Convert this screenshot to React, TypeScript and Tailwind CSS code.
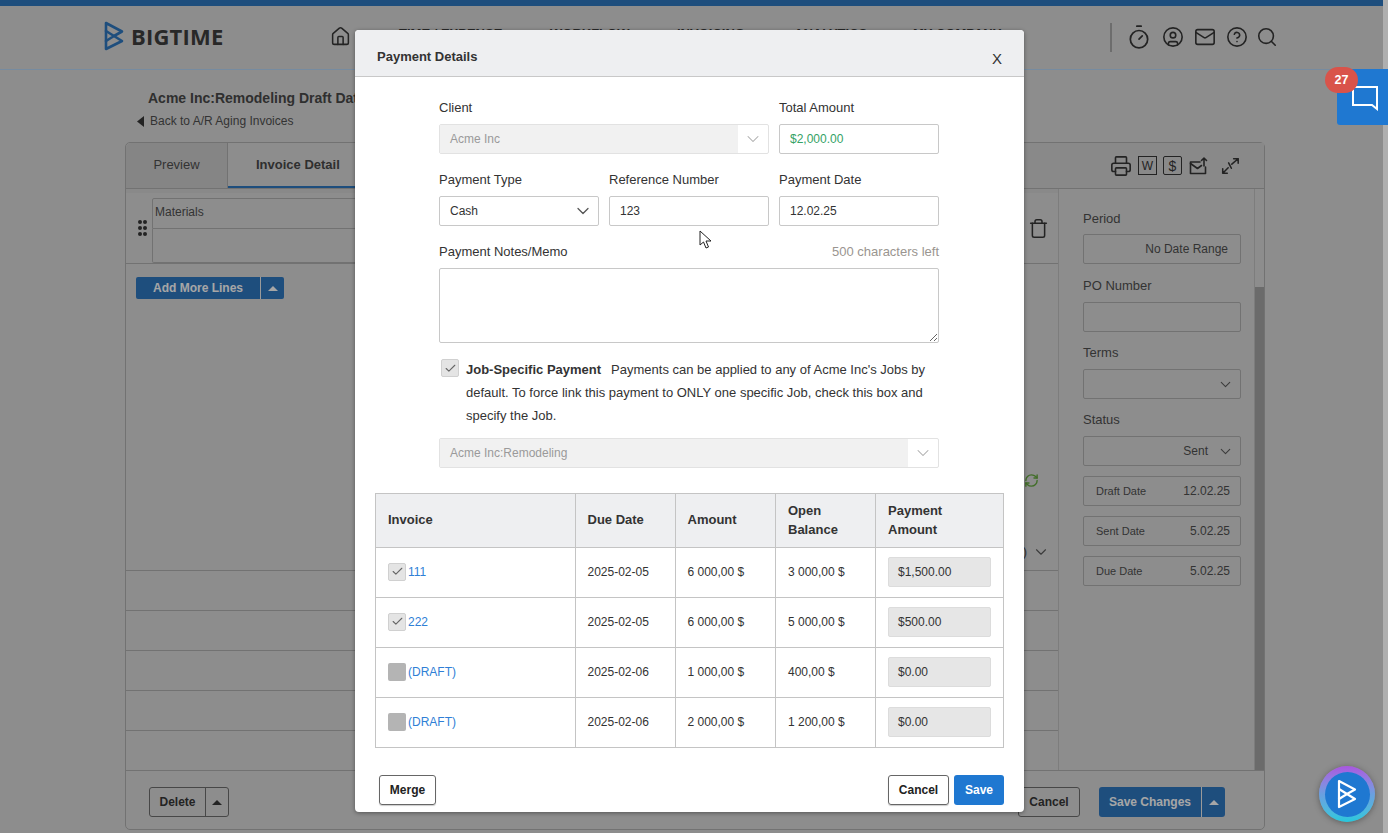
import React from 'react';
import {
  House,
  Timer,
  CircleUser,
  Mail,
  CircleHelp,
  Search,
  Printer,
  Trash,
  ChevronDown,
  RefreshCw,
  Check,
} from 'lucide-react';

const invoices = [
  { id: '111', due: '2025-02-05', amount: '6 000,00 $', open: '3 000,00 $', pay: '$1,500.00', checked: true },
  { id: '222', due: '2025-02-05', amount: '6 000,00 $', open: '5 000,00 $', pay: '$500.00', checked: true },
  { id: '(DRAFT)', due: '2025-02-06', amount: '1 000,00 $', open: '400,00 $', pay: '$0.00', checked: false },
  { id: '(DRAFT)', due: '2025-02-06', amount: '2 000,00 $', open: '1 200,00 $', pay: '$0.00', checked: false },
];

const BigTimeMark = ({ className }: { className?: string }) => (
  <svg viewBox="0 0 22 32" fill="none" stroke="currentColor" strokeLinejoin="round" strokeLinecap="round" className={className}>
    <path d="M3 3 L19 11.5 L11 16 L19 21 L3 29 Z" />
    <path d="M3 11 L11 16 L3 21" />
  </svg>
);

const Caret = () => (
  <svg width="10" height="5" viewBox="0 0 10 5" className="fill-current">
    <polygon points="5,0 10,5 0,5" />
  </svg>
);

const CheckBox = ({ checked }: { checked: boolean }) =>
  checked ? (
    <span className="flex h-[18px] w-[18px] shrink-0 items-center justify-center rounded-[2px] border border-[#d0d0d0] bg-[#e4e4e4]">
      <Check size={13} strokeWidth={2} className="text-[#666]" />
    </span>
  ) : (
    <span className="block h-[18px] w-[18px] shrink-0 rounded-[2px] bg-[#b4b4b4]" />
  );

const DisabledSelect = ({ value }: { value: string }) => (
  <div className="flex h-[30px] items-center rounded-[2px] border border-[#e2e2e2] text-[12px] text-[#9a9a9a]">
    <div className="flex h-full flex-1 items-center bg-[#f1f1f1] pl-[10px]">{value}</div>
    <div className="flex w-[30px] items-center justify-center">
      <ChevronDown size={20} strokeWidth={1.25} className="text-[#aaa]" />
    </div>
  </div>
);

const FieldLabel = ({ children }: { children: React.ReactNode }) => (
  <div className="mb-[5px] text-[13px] leading-[22px]">{children}</div>
);

const SideLabel = ({ children }: { children: React.ReactNode }) => (
  <div className="text-[13px] leading-[20px] text-[#4a4a4a]">{children}</div>
);

const SideDate = ({ label, value }: { label: string; value: string }) => (
  <div className="mt-[10px] flex h-[30px] items-center justify-between rounded-[2px] border border-[#a4a4a4] pl-[12px] pr-[10px] text-[11px] text-[#4a4a4a]">
    <span>{label}</span>
    <span className="text-[12px]">{value}</span>
  </div>
);

const Background = () => (
  <div className="flex h-full">
    <div className="flex min-w-0 flex-1 flex-col">
      <div className="h-[6px] shrink-0 bg-[#2c70b4]" />
      <header className="flex h-[64px] shrink-0 items-center border-b border-[#a9c8e6]">
        <div className="mb-[3px] ml-[103px] flex w-[227px] items-center">
          <BigTimeMark className="h-[32px] w-[22px] text-[#2c70b4] [stroke-width:2.6]" />
          <span className="ml-[6px] font-['Open_Sans',sans-serif] text-[22px] font-bold leading-none tracking-[0.2px] text-[#3a3a3a]">BIGTIME</span>
        </div>
        <House size={21} strokeWidth={1.75} className="mb-[2px] w-[69px] shrink-0 pr-[48px] text-[#333]" />
        <nav className="mb-[7px] flex text-[13px] font-bold text-[#3a3a3a]">
          <span className="w-[151px]">TIME / EXPENSE</span>
          <span className="w-[127px]">WORKFLOW</span>
          <span className="w-[117px]">INVOICING</span>
          <span className="w-[119px]">ANALYTICS</span>
          <span className="w-[197px]">MY COMPANY</span>
        </nav>
        <div className="h-[29px] w-[2px] bg-[#9d9d9d]" />
        <div className="mb-[2px] ml-[14px] flex items-center gap-[10px] text-[#333]">
          <Timer size={26} strokeWidth={1.6} />
          <CircleUser size={22} strokeWidth={1.75} />
          <Mail size={22} strokeWidth={1.75} />
          <CircleHelp size={22} strokeWidth={1.75} />
          <Search size={22} strokeWidth={1.75} className="ml-[-2px]" />
        </div>
      </header>

      <div className="ml-[136px] mt-[19px] h-[53px] shrink-0">
        <div className="pl-[12px] text-[14px] font-bold leading-[18px] text-[#444]">Acme Inc:Remodeling Draft Date 12.02.25</div>
        <div className="mt-[5px] flex items-center text-[12px] leading-[18px] text-[#4a4a4a]">
          <svg width="8" height="11" viewBox="0 0 8 11" className="mr-[6px] fill-[#333]">
            <polygon points="8,0 8,11 1,5.5" />
          </svg>
          Back to A/R Aging Invoices
        </div>
      </div>

      <section className="ml-[125px] flex h-[688px] w-[1140px] shrink-0 flex-col rounded-[5px] border border-[#a4a4a4]">
        <div className="flex h-[46px] shrink-0 items-stretch border-b border-[#a4a4a4]">
          <div className="flex w-[102px] items-center justify-center rounded-tl-[5px] border-r border-[#a4a4a4] bg-[#bfbfbf] pb-[1px] text-[13px] text-[#4a4a4a]">Preview</div>
          <div className="flex w-[200px] items-center border-b-[2px] border-[#2c70b4] pl-[28px] text-[13px] font-bold text-[#444]">Invoice Detail</div>
          <div className="flex flex-1 items-center justify-end gap-[6px] bg-[#c4c4c4] pr-[24px] text-[#333]">
            <Printer size={22} strokeWidth={1.75} />
            <span className="flex h-[19px] w-[19px] items-center justify-center border-[1.5px] border-[#333] text-[12px] leading-none">W</span>
            <span className="flex h-[19px] w-[19px] items-center justify-center rounded-[2px] border-[1.5px] border-[#333] text-[14px] leading-none">$</span>
            <svg width="20" height="20" viewBox="0 0 20 20" fill="none" stroke="currentColor" strokeWidth="1.6" strokeLinejoin="round" strokeLinecap="round">
              <path d="M12 6H2.5v11.5h15V11" />
              <path d="M2.5 7.5l7 5 4-3" />
              <path d="M16 10V2M13.5 4.5L16 2l2.5 2.5" />
            </svg>
            <svg width="20" height="20" viewBox="0 0 22 22" fill="none" stroke="currentColor" strokeWidth="1.7" strokeLinecap="round" strokeLinejoin="round" className="ml-[6px]">
              <path d="M13 9l7-6M15 3h5v5M9 13l-6 6M3 14v5h5M9.5 7.5l3 6" />
            </svg>
          </div>
        </div>

        <div className="flex min-h-0 flex-1">
          <div className="flex w-[933px] shrink-0 flex-col border-r border-[#b4b4b4]">
            <div className="h-[4px] shrink-0 bg-[#c4c4c4]" />
            <div className="flex h-[71px] shrink-0 items-center border-b border-[#a4a4a4]">
              <div className="ml-[12px] grid w-[9px] grid-cols-2 gap-x-[1px] gap-y-[2px]">
                {[0, 1, 2, 3, 4, 5].map((d) => (
                  <span key={d} className="h-[4px] w-[4px] rounded-full bg-[#333]" />
                ))}
              </div>
              <div className="ml-[5px] flex flex-1 flex-col self-start pt-[5px]">
                <div className="flex h-[31px] items-center rounded-tl-[2px] border border-[#a4a4a4] pb-[3px] pl-[2px] text-[12px] text-[#4a4a4a]">Materials</div>
                <div className="h-[34px] rounded-bl-[2px] border border-t-0 border-[#a4a4a4]" />
              </div>
              <Trash size={21} strokeWidth={1.75} className="ml-[8px] mr-[9px] text-[#333]" />
            </div>
            <div className="ml-[10px] mt-[13px] flex h-[22px] w-[148px] items-center rounded-[2px] bg-[#2c70b4] text-[12px] font-bold text-[#eee]">
              <span className="flex h-full w-[125px] items-center justify-center border-r border-[#ddd]">Add More Lines</span>
              <span className="flex flex-1 justify-center"><Caret /></span>
            </div>
            <div className="mt-auto flex flex-col">
              <div className="flex h-[24px] justify-end pr-[18px]">
                <RefreshCw size={15} strokeWidth={2.25} className="mr-[1px] text-[#5f9e3b]" />
              </div>
              <div className="mt-[30px] flex h-[44px] items-center justify-end border-b border-[#a4a4a4] pr-[8px] pt-[6px] text-[13px] text-[#4a4a4a]">
                ) <ChevronDown size={18} strokeWidth={1.5} className="ml-[5px] text-[#555]" />
              </div>
              {[0, 1, 2, 3].map((r) => (
                <div key={r} className="h-[40px] border-b border-[#a4a4a4]" />
              ))}
              <div className="h-[39px]" />
            </div>
          </div>

          <aside className="w-[195px] shrink-0 pl-[24px] pr-[13px] pt-[20px]">
            <SideLabel>Period</SideLabel>
            <div className="mt-[5px] flex h-[30px] items-center justify-end rounded-[2px] border border-[#a4a4a4] pb-[1px] pr-[12px] text-[12px] text-[#4a4a4a]">No Date Range</div>
            <div className="mt-[12px]"><SideLabel>PO Number</SideLabel></div>
            <div className="mt-[6px] h-[30px] rounded-[2px] border border-[#a4a4a4]" />
            <div className="mt-[11px]"><SideLabel>Terms</SideLabel></div>
            <div className="mt-[6px] flex h-[30px] items-center justify-end rounded-[2px] border border-[#a4a4a4] pr-[6px]">
              <ChevronDown size={17} strokeWidth={1.5} className="text-[#555]" />
            </div>
            <div className="mt-[11px]"><SideLabel>Status</SideLabel></div>
            <div className="mt-[6px] flex h-[30px] items-center justify-end rounded-[2px] border border-[#a4a4a4] pr-[6px] text-[12px] text-[#4a4a4a]">
              Sent
              <ChevronDown size={17} strokeWidth={1.5} className="ml-[9px] text-[#555]" />
            </div>
            <SideDate label="Draft Date" value="12.02.25" />
            <SideDate label="Sent Date" value="5.02.25" />
            <SideDate label="Due Date" value="5.02.25" />
          </aside>

          <div className="flex w-[10px] shrink-0 flex-col border-l border-[#b4b4b4]">
            <div className="h-[98px]" />
            <div className="flex-1 bg-[#9a9a9a]" />
          </div>
        </div>

        <footer className="flex h-[59px] shrink-0 items-center border-t border-[#a4a4a4] pl-[23px] pt-[4px] text-[12px] font-bold">
          <div className="flex h-[30px] w-[80px] items-center rounded-[3px] border border-[#666] text-[#333]">
            <span className="flex h-full w-[56px] items-center justify-center border-r border-[#666]">Delete</span>
            <span className="flex flex-1 justify-center"><Caret /></span>
          </div>
          <div className="ml-auto flex h-[30px] w-[62px] items-center justify-center rounded-[3px] border border-[#666] text-[#333]">Cancel</div>
          <div className="ml-[19px] mr-[39px] flex h-[30px] w-[126px] items-center rounded-[3px] bg-[#2c70b4] text-[#eee]">
            <span className="flex h-full w-[103px] items-center justify-center border-r border-[#ddd]">Save Changes</span>
            <span className="flex flex-1 justify-center"><Caret /></span>
          </div>
        </footer>
      </section>
    </div>
    <div className="w-[5px] shrink-0 bg-[#fbfbfb]" />
  </div>
);

const PaymentDialog = () => (
  <div className="absolute left-[355px] top-[30px] h-[782px] w-[669px] overflow-hidden rounded-[4px] bg-white shadow-[0_1px_4px_rgba(0,0,0,0.4)]">
    <div className="flex h-[47px] items-center justify-between border-b border-[#c8c8c8] bg-[#eeeff1] px-[22px]">
      <h2 className="mt-[8px] text-[13px] font-bold text-[#333]">Payment Details</h2>
      <span className="mt-[12px] text-[15px] text-[#333]">X</span>
    </div>

    <div className="ml-[84px] w-[500px] pt-[20px] text-[#333]">
      <div className="grid grid-cols-[330px_160px] gap-x-[10px]">
        <div>
          <FieldLabel>Client</FieldLabel>
          <DisabledSelect value="Acme Inc" />
        </div>
        <div>
          <FieldLabel>Total Amount</FieldLabel>
          <div className="flex h-[30px] items-center rounded-[2px] border border-[#c8c8c8] pl-[10px] text-[12px] text-[#35a265]">$2,000.00</div>
        </div>
      </div>

      <div className="mt-[15px] grid grid-cols-3 gap-x-[10px]">
        <div>
          <FieldLabel>Payment Type</FieldLabel>
          <div className="flex h-[30px] items-center justify-between rounded-[2px] border border-[#c8c8c8] pl-[10px] pr-[5px] text-[12px]">
            Cash
            <ChevronDown size={20} strokeWidth={1.5} className="text-[#555]" />
          </div>
        </div>
        <div>
          <FieldLabel>Reference Number</FieldLabel>
          <div className="flex h-[30px] items-center rounded-[2px] border border-[#c8c8c8] pl-[10px] text-[12px]">123</div>
        </div>
        <div>
          <FieldLabel>Payment Date</FieldLabel>
          <div className="flex h-[30px] items-center rounded-[2px] border border-[#c8c8c8] pl-[10px] text-[12px]">12.02.25</div>
        </div>
      </div>

      <div className="mb-[5px] mt-[15px] flex justify-between text-[13px] leading-[22px]">
        <span>Payment Notes/Memo</span>
        <span className="text-[#9a9590]">500 characters left</span>
      </div>
      <textarea className="block h-[75px] w-full rounded-[2px] border border-[#c8c8c8] outline-none" />

      <div className="mt-[15px] flex">
        <div className="ml-[2px] mr-[7px] mt-[1px]"><CheckBox checked /></div>
        <p className="text-[13px] leading-[23px]">
          <b className="mr-[10px]">Job-Specific Payment</b>
          Payments can be applied to any of Acme Inc's Jobs by default. To force link this payment to ONLY one specific Job, check this box and specify the Job.
        </p>
      </div>

      <div className="mt-[11px]"><DisabledSelect value="Acme Inc:Remodeling" /></div>
    </div>

    <table className="ml-[20px] mt-[25px] w-[628px] table-fixed border-collapse text-[12px] text-[#333]">
      <colgroup>
        <col className="w-[200px]" />
        <col className="w-[100px]" />
        <col className="w-[100px]" />
        <col className="w-[100px]" />
        <col className="w-[128px]" />
      </colgroup>
      <thead>
        <tr className="h-[54px] bg-[#eeeff1] text-left text-[13px] leading-[19px]">
          <th className="border border-[#c4c4c4] pb-[2px] pl-[12px] font-bold">Invoice</th>
          <th className="border border-[#c4c4c4] pb-[2px] pl-[11.5px] font-bold">Due Date</th>
          <th className="border border-[#c4c4c4] pb-[2px] pl-[11.5px] font-bold">Amount</th>
          <th className="border border-[#c4c4c4] pb-[2px] pl-[12px] font-bold">Open<br />Balance</th>
          <th className="border border-[#c4c4c4] pb-[2px] pl-[12px] font-bold">Payment<br />Amount</th>
        </tr>
      </thead>
      <tbody>
        {invoices.map((inv, i) => (
          <tr key={i} className="h-[50px]">
            <td className="border border-[#c4c4c4] pb-[2px] pl-[12px]">
              <div className="flex items-center gap-[2px] text-[#2f7fd6]">
                <CheckBox checked={inv.checked} />
                {inv.id}
              </div>
            </td>
            <td className="border border-[#c4c4c4] pb-[2px] pl-[11.5px]">{inv.due}</td>
            <td className="border border-[#c4c4c4] pb-[2px] pl-[11.5px]">{inv.amount}</td>
            <td className="border border-[#c4c4c4] pb-[2px] pl-[12px]">{inv.open}</td>
            <td className="border border-[#c4c4c4] pb-[2px] pl-[12px]">
              <div className="flex h-[30px] w-[103px] items-center rounded-[2px] border border-[#dcdcdc] bg-[#e6e6e6] pl-[9px]">{inv.pay}</div>
            </td>
          </tr>
        ))}
      </tbody>
    </table>

    <div className="mt-[27px] flex px-[20px] text-[12px] font-bold">
      <button className="ml-[4px] h-[30px] w-[57px] rounded-[3px] border border-[#666] text-[#222] shadow-[0_1px_1px_rgba(0,0,0,0.2)]">Merge</button>
      <button className="ml-auto h-[30px] w-[61px] rounded-[3px] border border-[#666] text-[#222] shadow-[0_1px_1px_rgba(0,0,0,0.2)]">Cancel</button>
      <button className="ml-[5px] h-[30px] w-[50px] rounded-[3px] bg-[#1f78d1] text-white">Save</button>
    </div>
  </div>
);

export default function App() {
  return (
    <div className="relative h-[833px] w-[1388px] overflow-hidden bg-[#cbcbcb] font-['Liberation_Sans',Arial,sans-serif]">
      <Background />
      <div className="absolute inset-0 bg-black/30" />
      <PaymentDialog />

      {/* mouse pointer */}
      <svg width="14" height="20" viewBox="0 0 14 20" className="absolute left-[699px] top-[230px]" fill="#fff" stroke="#222" strokeWidth="1">
        <path d="M1 1v14l3.5-3 2.5 6 2.5-1-2.5-6H12z" />
      </svg>

      {/* chat tab */}
      <div className="absolute right-0 top-[69px] flex h-[56px] w-[51px] items-center justify-center rounded-bl-[3px] bg-[#1f78d1]">
        <svg width="28" height="26" viewBox="0 0 28 26" fill="none" stroke="#fff" strokeWidth="2" className="ml-[4px] mt-[2px]">
          <path d="M2 2h24v22l-5-4H2z" />
        </svg>
      </div>
      <div className="absolute left-[1325px] top-[67px] flex h-[26px] w-[33px] items-center justify-center rounded-full bg-[#d9534a] text-[12.5px] font-bold text-white">27</div>

      {/* assistant button */}
      <div className="absolute left-[1319px] top-[766px] flex h-[56px] w-[56px] items-center justify-center rounded-full bg-gradient-to-b from-[#a855e0] via-[#6a9fe0] to-[#22c8dc] shadow-[0_1px_6px_rgba(0,0,0,0.35)]">
        <div className="flex h-[45px] w-[45px] items-center justify-center rounded-full bg-[#1f78d1]">
          <BigTimeMark className="h-[34px] w-[22px] text-white [stroke-width:2.2]" />
        </div>
      </div>
    </div>
  );
}
